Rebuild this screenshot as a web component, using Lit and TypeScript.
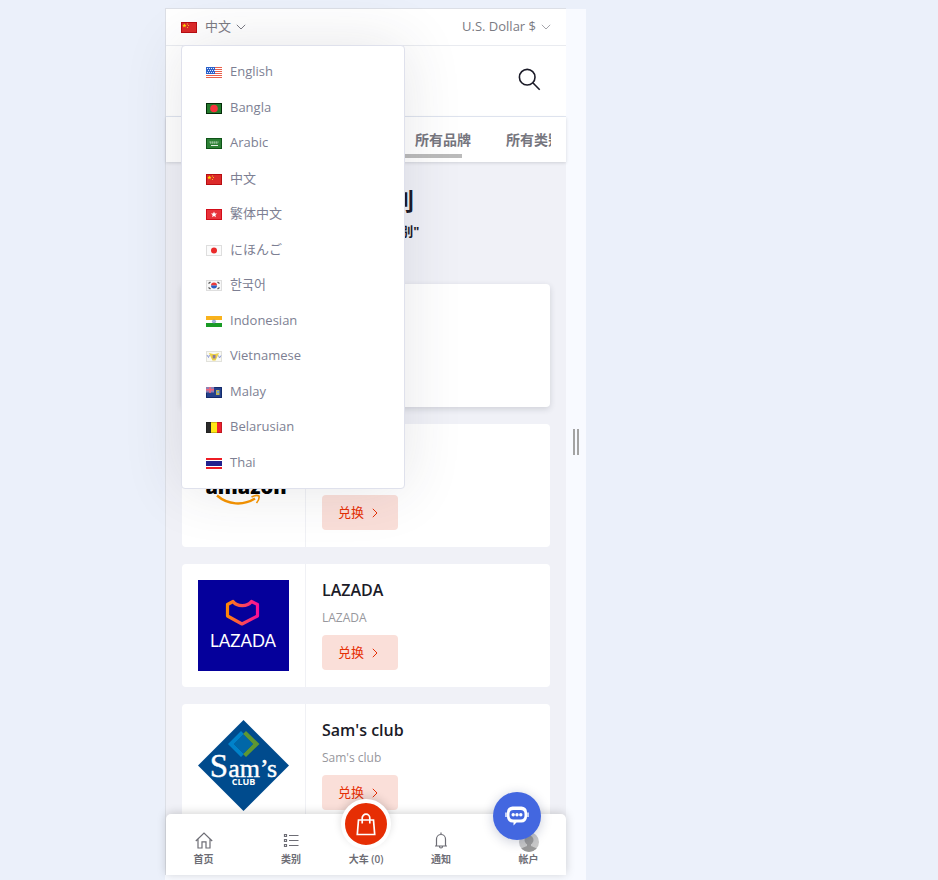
import { LitElement, html, css, svg, SVGTemplateResult, TemplateResult } from "lit";
import { customElement } from "lit/decorators.js";

const star = (x: number, y: number, r: number, fill: string) => {
  const pts: string[] = [];
  for (let i = 0; i < 10; i++) {
    const a = -Math.PI / 2 + (i * Math.PI) / 5;
    const d = i % 2 ? r * 0.45 : r;
    pts.push(`${x + d * Math.cos(a)},${y + d * Math.sin(a)}`);
  }
  return svg`<polygon points=${pts.join(" ")} fill=${fill} />`;
};

const flagArt: Record<string, SVGTemplateResult> = {
  us: svg`<rect width="16" height="11" fill="#fff"/>
    <path d="M0 .5h16M0 2.5h16M0 4.5h16M0 6.5h16M0 8.5h16M0 10.5h16" stroke="#e8604c"/>
    <rect width="9" height="7" fill="#2c62c9"/>
    <path d="M1 1.5h8M2 3.5h7M1 5.5h8" stroke="#dfe9ff" stroke-dasharray="1 1"/>`,
  bd: svg`<rect width="16" height="11" fill="#247a2c"/><circle cx="8" cy="5.5" r="3.8" fill="#f5323c"/>
    <rect x=".5" y=".5" width="15" height="10" fill="none" stroke="#032b08"/>`,
  sa: svg`<rect width="16" height="11" fill="#2c8035"/><path d="M3.5 4h9M4 5h8" stroke="#b5d6b8" stroke-dasharray="1.5 .5"/>
    <path d="M5 7.5h7" stroke="#e3f0e4"/><rect x=".5" y=".5" width="15" height="10" fill="none" stroke="#0e5317"/>`,
  cn: svg`<rect width="16" height="11" fill="#dc2a2a"/>${star(3.4, 3.6, 2.2, "#ffde00")}
    <path d="M6.5 1.5v1M7.5 3v1M6.5 5v1" stroke="#f4c020"/>
    <rect x=".5" y=".5" width="15" height="10" fill="none" stroke="#b80d12"/>`,
  hk: svg`<rect width="16" height="11" fill="#e8333b"/>${star(8, 5.6, 3.2, "#fff")}
    <rect x=".5" y=".5" width="15" height="10" fill="none" stroke="#d20d19"/>`,
  jp: svg`<rect width="16" height="11" fill="#fbfbfb"/><circle cx="8" cy="5.5" r="3" fill="#ea2a2a"/>
    <rect x=".5" y=".5" width="15" height="10" fill="none" stroke="#dedede"/>`,
  kr: svg`<rect width="16" height="11" fill="#f7f7f7"/><rect x=".5" y=".5" width="15" height="10" fill="none" stroke="#dedede"/>
    <path d="M5 5.5a3 3 0 0 1 6 0z" fill="#ea3a3a"/><path d="M5 5.5a3 3 0 0 0 6 0z" fill="#2a5fc4"/>
    <path d="M2.5 3.5l2-1.5M11.5 2l2 1.5M2.5 7.5l2 1.5M11.5 9l2-1.5" stroke="#555" stroke-width="1.2"/>`,
  in: svg`<rect width="16" height="11" fill="#fff"/><rect width="16" height="4" fill="#f9b21c"/>
    <rect y="7" width="16" height="4" fill="#199a25"/><circle cx="8" cy="5.5" r="1.6" fill="#a9b8dc" stroke="#7388c0" stroke-width=".6"/>`,
  vi: svg`<rect width="16" height="11" fill="#f9f9f3"/><rect x=".5" y=".5" width="15" height="10" fill="none" stroke="#e2e2dc"/>
    <path d="M3 2l4 1h2l4-1-2 4.500-1.500 3h-3L5 6.500z" fill="#ecd04a"/><rect x="6.700" y="4" width="2.800" height="3.400" fill="#8b7a9b"/>
    <path d="M1 4l1.5 2.5L3.5 4M12.5 4.500l1 2.500 1.500-2.500" fill="none" stroke="#8e9cd8"/>`,
  ky: svg`<rect width="16" height="11" fill="#24418c"/><path d="M0 0h8v5.500h-8z" fill="#8f7fb4"/>
    <path d="M4 0v6M0 2.700h8" stroke="#f0637a" stroke-width="1.500"/><rect x="10" y="3" width="3.500" height="5" fill="#b9b25a"/>
    <rect x="11" y="4" width="2" height="2" fill="#6fa1cf"/><path d="M.5 6v4.500h15v-10h-7" fill="none" stroke="#142a6a"/>`,
  be: svg`<rect width="16" height="11" fill="#ffe816"/><rect width="5" height="11" fill="#2a2a2a"/>
    <rect x="11" width="5" height="11" fill="#f0202c"/><rect x=".5" y=".5" width="15" height="10" fill="none" stroke="#000" stroke-opacity=".2"/>`,
  th: svg`<rect width="16" height="11" fill="#fff"/><path d="M0 1h16M0 10h16" stroke="#ee1c24" stroke-width="2"/>
    <rect y="3" width="16" height="5" fill="#21218e"/>`,
};

const flag = (code: string) =>
  html`<svg class="flag" width="16" height="11" viewBox="0 0 16 11" aria-hidden="true">${flagArt[code]}</svg>`;

const chevron = html`<svg class="chevron" width="10" height="6" viewBox="0 0 10 6" aria-hidden="true">
  <path d="M.8 .8L5 5 9.200 .8" fill="none" stroke="currentColor" />
</svg>`;

const languages: [string, string, string][] = [
  ["us", "English", "en"],
  ["bd", "Bangla", "bn"],
  ["sa", "Arabic", "ar"],
  ["cn", "中文", "zh-CN"],
  ["hk", "繁体中文", "zh-CN"],
  ["jp", "にほんご", "ja"],
  ["kr", "한국어", "ko"],
  ["in", "Indonesian", "id"],
  ["vi", "Vietnamese", "vi"],
  ["ky", "Malay", "ms"],
  ["be", "Belarusian", "be"],
  ["th", "Thai", "th"],
];

const amazonLogo = html`<svg class="logo" viewBox="0 0 91 91" role="img" aria-label="Amazon">
  <text x="48" y="54" text-anchor="middle" font-family="Open Sans, sans-serif" font-weight="800" font-size="20">amazon</text>
  <path d="M19 55.500C30 65 45 66 57 58.500" fill="none" stroke="#f79400" stroke-width="2.400" />
  <path d="M53.500 57c3-1.500 6-2 7.500-1 .5 2-.5 4.500-2.500 7" fill="none" stroke="#f79400" stroke-width="1.600" />
</svg>`;

const lazadaLogo = html`<svg class="logo" viewBox="0 0 91 91" role="img" aria-label="Lazada">
  <defs>
    <linearGradient id="heart" x1="28" x2="61" y1="0" y2="0" gradientUnits="userSpaceOnUse">
      <stop offset="0" stop-color="#ff8c00" />
      <stop offset=".5" stop-color="#fb4a55" />
      <stop offset="1" stop-color="#f80a9c" />
    </linearGradient>
  </defs>
  <rect width="91" height="91" fill="#05009b" />
  <path d="M29.500 24.500L35 21.500C39 27 49.500 27 53.500 21.500L59.500 24.500V36L44 44L29.500 36Z" fill="none" stroke="url(#heart)" stroke-width="3.200" stroke-linejoin="round" />
  <text x="45" y="67" text-anchor="middle" font-family="Lato, sans-serif" font-size="17" fill="#fff">LAZADA</text>
</svg>`;

const samsLogo = html`<svg class="logo" viewBox="0 0 91 91" role="img" aria-label="Sam's Club">
  <path d="M45.500 0L91 45.500 45.500 91 0 45.500Z" fill="#004b8d" />
  <path d="M43 11L30 24 43 37 46 34 36 24 46 14Z" fill="#0082ca" />
  <path d="M48 11L61.500 24 48 37 45 34 55 24 45 14Z" fill="#5e9732" />
  <path d="M45.500 14.500L55 24 45.500 33.500 36 24Z" fill="#0067a8" />
  <text x="45.500" y="57" text-anchor="middle" font-family="Liberation Serif, serif" font-size="26" fill="#fff" stroke="#fff" stroke-width=".4"><tspan font-size="33">S</tspan>am’s</text>
  <text x="45.500" y="65" text-anchor="middle" font-family="Open Sans, sans-serif" font-weight="700" font-size="9" fill="#fff">CLUB</text>
</svg>`;

const brands: { name: string; logo: TemplateResult }[] = [
  { name: "Amazon", logo: amazonLogo },
  { name: "LAZADA", logo: lazadaLogo },
  { name: "Sam's club", logo: samsLogo },
];

@customElement("app-root")
export class AppRoot extends LitElement {
  static styles = css`
    * { box-sizing: border-box; }
    :host {
      box-sizing: border-box;
      display: grid;
      grid-template-columns: minmax(0, 401px) 20px;
      grid-template-rows: minmax(0, 1fr) 5px;
      height: 100vh;
      padding: 8px 0 0 165px;
      background: #ebf0fa;
      font-family: "Open Sans", "Noto Sans CJK SC", "Noto Sans CJK KR", sans-serif;
      font-size: 13px;
      line-height: 1.5;
      color: #7b7b83;
    }
    a { color: inherit; text-decoration: none; }
    button, select { font: inherit; color: inherit; background: none; border: 0; padding: 0; margin: 0; }
    svg { display: block; flex: none; }
    .screen {
      position: relative;
      display: flex;
      flex-direction: column;
      min-height: 0;
      border-top: 1px solid #dcdfe6;
      border-left: 1px solid #dcdfe6;
      background: #f0f1f7;
    }
    .grip {
      display: flex;
      align-items: center;
      justify-content: center;
      gap: 2px;
      margin-top: 1px;
      background: #f8faff;
    }
    .grip span { width: 2px; height: 26px; background: #a3a3a3; }
    .base { grid-column: 1 / -1; background: #f8faff; }
    .topbar {
      position: relative;
      z-index: 2;
      display: flex;
      justify-content: space-between;
      align-items: center;
      flex: none;
      height: 37px;
      padding: 0 15px;
      background: #fff;
      border-bottom: 1px solid #e9ebf0;
    }
    .language, .currency { display: flex; align-items: center; }
    .language { gap: 8px; }
    .language .chevron { margin-left: -3px; }
    .currency { gap: 5px; }
    .currency select { appearance: none; }
    .currency .chevron { color: #a5a5ab; }
    .menu {
      position: absolute;
      top: 100%;
      left: 15px;
      width: 224px;
      margin: 0;
      padding: 8px 0;
      list-style: none;
      background: #fff;
      border: 1px solid #dfe1ec;
      border-radius: 4px;
      box-shadow: 0 0 60px rgba(50, 48, 65, 0.12);
      color: #7d7f93;
    }
    .menu a { display: flex; align-items: center; gap: 8px; padding: 8px 24px; }
    .menu .flag { margin-top: 2px; }
    .search-row {
      display: flex;
      flex: none;
      align-items: center;
      justify-content: flex-end;
      height: 71px;
      padding: 0 25px 4px;
      background: #fff;
      border-bottom: 1px solid #e4e9f4;
      color: #1b1b28;
    }
    .tabs {
      position: relative;
      z-index: 1;
      flex: none;
      padding: 12px 15px 4px 16px;
      background: #fff;
      box-shadow: 0 1px 3px rgba(40, 42, 53, 0.16);
    }
    .tab-list {
      display: flex;
      gap: 35px;
      padding-left: 2px;
      overflow: hidden;
      white-space: nowrap;
      font-size: 14px;
      font-weight: 600;
      line-height: 22px;
      color: #76767e;
    }
    .tab-list a { flex: none; }
    .thumb { width: 76%; height: 4px; margin-top: 3px; background: #bbb; }
    main { flex: 1; min-height: 0; overflow: hidden; }
    .intro { padding: 21px 16px 41px; text-align: center; color: #1b1b28; font-weight: 700; }
    .intro h1 { margin: 0; font-size: 24px; line-height: 36px; }
    .intro p { margin: 0; line-height: 24px; }
    .cards { display: grid; gap: 17px; padding: 0 16px; }
    .card { display: flex; min-height: 123px; background: #fff; border-radius: 4px; }
    .featured { box-shadow: 0 2px 6px rgba(40, 42, 53, 0.16); }
    .art { padding: 16px; border-right: 1px solid #f0f1f5; }
    .logo { width: 91px; height: 91px; }
    .info { display: flex; flex-direction: column; align-items: flex-start; padding: 16px; }
    .info h2 { margin: 0; font-size: 16px; font-weight: 600; line-height: 21px; color: #1b1b28; }
    .info p { margin: 7px 0; font-size: 12px; line-height: 20px; color: #97979d; }
    .redeem {
      display: flex;
      align-items: center;
      gap: 8px;
      height: 35px;
      padding: 0 20px 0 16px;
      border-radius: 4px;
      background: #fadfd9;
      color: #e62e04;
      cursor: pointer;
    }
    .bottom {
      position: relative;
      z-index: 3;
      display: grid;
      grid-template-columns: 3fr 4fr 2fr 4fr 3fr;
      grid-template-rows: minmax(0, 1fr);
      flex: none;
      height: 61px;
      background: #fff;
      border-radius: 5px 5px 0 0;
      box-shadow: 0 -1px 10px rgba(0, 0, 0, 0.18);
      font-size: 10px;
      font-weight: 600;
      line-height: 16px;
      color: #6d6d75;
    }
    .bottom a {
      display: flex;
      flex-direction: column;
      align-items: center;
      justify-content: flex-end;
      gap: 2px;
      min-height: 0;
      padding-bottom: 8px;
      white-space: nowrap;
    }
    .avatar { margin-bottom: -3px; }
    .cart-icon {
      display: grid;
      place-items: center;
      flex: none;
      width: 50px;
      height: 50px;
      border: 4px solid #fff;
      border-radius: 50%;
      background: #e62e04;
      box-shadow: 0 -3px 8px rgba(0, 0, 0, 0.14);
    }
    .chat {
      position: absolute;
      z-index: 4;
      right: 25px;
      bottom: 35px;
      display: grid;
      place-items: center;
      width: 48px;
      height: 48px;
      border-radius: 50%;
      background: #4367e0;
      box-shadow: 0 2px 12px rgba(20, 30, 80, 0.22);
      cursor: pointer;
    }
  `;

  private card(name: string, logo: TemplateResult) {
    return html`<article class="card">
      <div class="art">${logo}</div>
      <div class="info">
        <h2>${name}</h2>
        <p>${name}</p>
        <button class="redeem">
          兑换
          <svg width="6" height="10" viewBox="0 0 6 10" aria-hidden="true"><path d="M.8 .8L5 5 .8 9.200" fill="none" stroke="currentColor" /></svg>
        </button>
      </div>
    </article>`;
  }

  render() {
    return html`
      <div class="screen">
        <header class="topbar">
          <button class="language" aria-haspopup="true" aria-expanded="true">${flag("cn")}<span>中文</span>${chevron}</button>
          <label class="currency">
            <select aria-label="Currency"><option>U.S. Dollar $</option></select>
            ${chevron}
          </label>
          <ul class="menu">
            ${languages.map(([code, label, lang]) => html`<li><a href="#" lang=${lang}>${flag(code)}<span>${label}</span></a></li>`)}
          </ul>
        </header>
        <div class="search-row">
          <button aria-label="搜索">
            <svg width="23" height="23" viewBox="0 0 23 23">
              <g fill="none" stroke="currentColor" stroke-width="1.600">
                <circle cx="9.200" cy="9.200" r="7.800" />
                <path d="M14.800 14.800L21.700 21.700" />
              </g>
            </svg>
          </button>
        </div>
        <nav class="tabs">
          <div class="tab-list">
            <a href="#">首页</a><a href="#">限时抢购</a><a href="#">热卖品</a><a href="#">所有品牌</a><a href="#">所有类别</a>
          </div>
          <div class="thumb"></div>
        </nav>
        <main>
          <div class="intro">
            <h1>所有类别</h1>
            <p>全部的 "所有类别"</p>
          </div>
          <div class="cards">
            <div class="card featured"></div>
            ${brands.map((b) => this.card(b.name, b.logo))}
          </div>
        </main>
        <nav class="bottom">
          <a href="#">
            <svg width="18" height="17" viewBox="0 0 18 17" fill="none" stroke="currentColor" stroke-width="1.200">
              <path d="M.8 9L9 1 17.200 9M3 7.200V16H7V9.800H11V16H15V7.200" />
            </svg>
            <span>首页</span>
          </a>
          <a href="#">
            <svg width="16" height="17" viewBox="0 0 16 17" fill="none" stroke="currentColor">
              <path d="M1.500 2.500h2v2h-2zM1.500 7.500h2v2h-2zM1.500 12.500h2v2h-2zM6 3.500h9.500M6 8.500h9.500M6 13.500h9.500" stroke-width="1.200" />
            </svg>
            <span>类别</span>
          </a>
          <a href="#">
            <span class="cart-icon">
              <svg width="20" height="23" viewBox="0 0 20 23" fill="none" stroke="#fff" stroke-width="1.700">
                <path d="M2.500 7H17.500L18.700 21.500H1.300ZM6.200 10.500V5a3.800 3.800 0 0 1 7.600 0v5.500" />
              </svg>
            </span>
            <span>大车 (0)</span>
          </a>
          <a href="#">
            <svg width="14" height="17" viewBox="0 0 14 17" fill="none" stroke="currentColor" stroke-width="1.200">
              <path d="M1 14h12M2.500 14V7a4.500 4.500 0 0 1 9 0V14M7 .5V2.500M5.500 14.500a1.500 1.500 0 0 0 3 0" />
            </svg>
            <span>通知</span>
          </a>
          <a href="#">
            <svg class="avatar" width="20" height="20" viewBox="0 0 20 20">
              <defs><clipPath id="face"><circle cx="10" cy="10" r="10" /></clipPath></defs>
              <g clip-path="url(#face)">
                <rect width="20" height="20" fill="#c9c9c9" />
                <circle cx="10" cy="8" r="4.500" fill="#999" />
                <path d="M8 11h4v3l6 2.500V20H2v-3.500l6-2.500z" fill="#999" />
              </g>
            </svg>
            <span>帐户</span>
          </a>
        </nav>
        <button class="chat" aria-label="在线客服">
          <svg width="24" height="20" viewBox="0 0 24 20">
            <path d="M1 6.500V11" stroke="#fff" stroke-width="1.400" />
            <path d="M23 6.500V11" stroke="#fff" stroke-width="1.400" />
            <path d="M7.500 .5h9a5.500 5.500 0 0 1 5.500 5.500v5a5.500 5.500 0 0 1-5.500 5.500h-5L8.500 19.500V16.500h-1a5.500 5.500 0 0 1-5.500-5.500v-5a5.500 5.500 0 0 1 5.500-5.500z" fill="#fff" />
            <rect x="4.500" y="4" width="15" height="9.500" rx="4" fill="#4367e0" />
            <circle cx="8.200" cy="8.700" r="1.700" fill="#fff" /><circle cx="12" cy="8.700" r="1.700" fill="#fff" /><circle cx="15.800" cy="8.700" r="1.700" fill="#fff" />
          </svg>
        </button>
      </div>
      <div class="grip"><span></span><span></span></div>
      <div class="base"></div>
    `;
  }
}
